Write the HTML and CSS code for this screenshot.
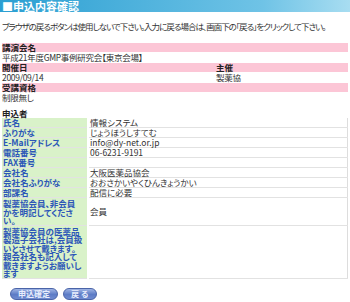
FILE: index.html
```
<!DOCTYPE html>
<html lang="ja">

<head>
    <meta charset="UTF-8">
    <title>申込内容確認</title>
    <link rel="stylesheet" href="styles.css">
</head>

<body>
    <div class="page">
        <h1 class="titulo">■申込内容確認</h1>
        <p class="aviso">ブラウザの戻るボタンは使用しないで下さい。入力に戻る場合は、画面下の「戻る」をクリックして下さい。</p>

        <div class="seminario">
            <div class="cab largo">講演会名</div>
            <div class="valor largo">平成21年度GMP事例研究会【東京会場】</div>
            <div class="cab">開催日</div>
            <div class="cab">主催</div>
            <div class="valor">2009/09/14</div>
            <div class="valor">製薬協</div>
            <div class="cab largo">受講資格</div>
            <div class="valor largo">制限無し</div>
        </div>

        <h2 class="sub">申込者</h2>
        <table class="dados">
            <tr><th>氏名</th><td>情報システム</td></tr>
            <tr><th>ふりがな</th><td>じょうほうしすてむ</td></tr>
            <tr><th>E-Mailアドレス</th><td>info@dy-net.or.jp</td></tr>
            <tr><th>電話番号</th><td>06-6231-9191</td></tr>
            <tr><th>FAX番号</th><td></td></tr>
            <tr><th>会社名</th><td>大阪医薬品協会</td></tr>
            <tr><th>会社名ふりがな</th><td>おおさかいやくひんきょうかい</td></tr>
            <tr><th>部課名</th><td>配信に必要</td></tr>
            <tr class="longo"><th>製薬協会員、非会員<br>かを明記してくださ<br>い。</th><td>会員</td></tr>
            <tr class="longo"><th>製薬協会員の医薬品<br>製造子会社は,会員扱<br>いとさせて戴きます。<br>親会社名も記入して<br>戴きますようお願いし<br>ます</th><td></td></tr>
        </table>

        <div class="botoes">
            <button class="btn">申込確定</button>
            <button class="btn">戻 る</button>
        </div>
    </div>
</body>

</html>
```

FILE: styles.css
```
body {
    margin: 0;
    padding: 0;
    font-family: "Noto Sans CJK JP", "DejaVu Sans", sans-serif;
    font-feature-settings: "palt";
    font-size: 8.5px;
    color: #222;
    background-color: #fff;
}

.page {
    width: 346px;
    padding: 0 2px;
}

.titulo {
    margin: 0 -2px;
    height: 12px;
    padding-left: 2px;
    font-size: 11px;
    line-height: 12px;
    color: #fff;
    background: linear-gradient(to right, #2b9fd2, #6fc3e6 75%, #a8ddf1);
}

.aviso {
    margin: 9px 0 11px;
    line-height: 10px;
    letter-spacing: -1px;
    white-space: nowrap;
    color: #333;
}

.seminario {
    display: grid;
    grid-template-columns: 214px 1fr;
}

.largo {
    grid-column: 1 / 3;
}

.cab {
    height: 9px;
    line-height: 9px;
    font-weight: bold;
    background-color: #fcc6d6;
    margin-top: 1px;
}

.valor {
    height: 10px;
    line-height: 10px;
    letter-spacing: -0.3px;
    color: #333;
}

.sub {
    margin: 7px 0 0;
    font-size: 8.5px;
    line-height: 9px;
}

.dados {
    width: 100%;
    border-collapse: collapse;
    border-right: 1px solid #ddd;
}

.dados th,
.dados td {
    padding: 0 1px;
    border-bottom: 1px solid #e2e2e2;
    line-height: 9px;
    height: 9px;
    vertical-align: middle;
}

.dados th {
    width: 83px;
    text-align: left;
    color: #2c56b8;
    background-color: #d9f2c9;
    border-right: 2px solid #fff;
    white-space: nowrap;
}

.dados .longo th {
    line-height: 8.5px;
    padding: 1px 1px 0;
}

.dados td {
    color: #333;
}

.botoes {
    display: flex;
    gap: 5px;
    margin: 9px 0 0 8px;
}

.btn {
    height: 12px;
    padding: 0 7px;
    border: 1px solid #4a64a8;
    border-radius: 6px;
    font-family: inherit;
    font-size: 8px;
    line-height: 9px;
    font-weight: bold;
    color: #e8eefc;
    background: linear-gradient(#9fb4e4, #5d7cc6 55%, #6f8bd0);
}
```
